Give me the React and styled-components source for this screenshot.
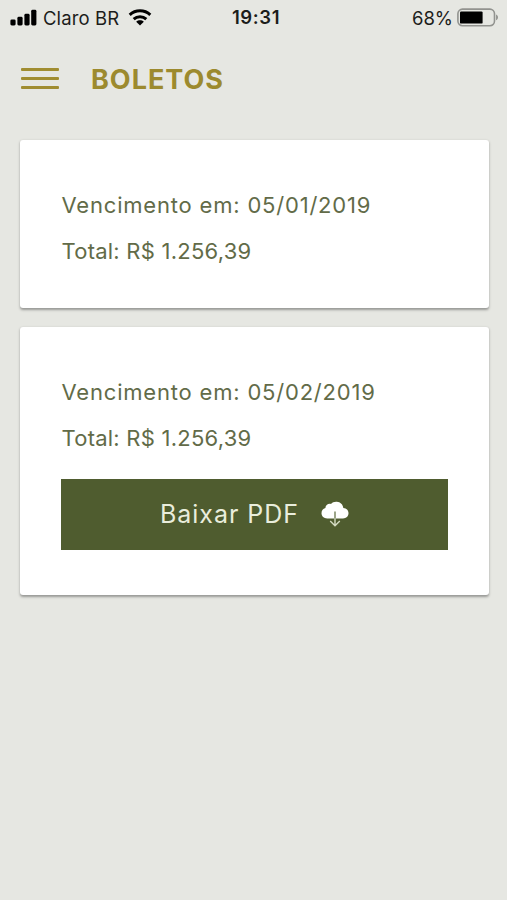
import React from "react";
import styled, { createGlobalStyle } from "styled-components";

const boletos = [
  { id: 1, vencimento: "05/01/2019", total: "1.256,39" },
  { id: 2, vencimento: "05/02/2019", total: "1.256,39", pdf: true },
];

const SignalIcon = () => (
  <svg width="27" height="18" viewBox="0 0 27 18">
    <rect x="0.4" y="10.4" width="5.2" height="6" rx="1.4" />
    <rect x="7.4" y="7.8" width="5.2" height="8.6" rx="1.4" />
    <rect x="14.4" y="4.8" width="5.2" height="11.6" rx="1.4" />
    <rect x="21.2" y="0.8" width="5.2" height="15.6" rx="1.4" />
  </svg>
);

const WifiIcon = () => (
  <svg width="24" height="18" viewBox="0 0 24 18">
    <g fill="none" stroke="#000" strokeWidth="3">
      <path d="M1.7 5.9C7.5 0.5 16.5 0.5 22.3 5.9" />
      <path d="M5.7 10.1C9.3 6.8 14.7 6.8 18.3 10.1" />
    </g>
    <path d="M8.2 12.7C10.4 10.8 13.6 10.8 15.8 12.7L12 16.6Z" />
  </svg>
);

const BatteryIcon = () => (
  <svg width="42" height="20" viewBox="0 0 42 20">
    <rect
      x="0.9"
      y="1.1"
      width="36.6"
      height="16.6"
      rx="4.6"
      fill="none"
      stroke="#92938f"
      strokeWidth="1.6"
    />
    <rect x="3" y="3.4" width="22.6" height="12.2" rx="1.2" />
    <path d="M39.2 6.4C41.4 7.6 41.4 11 39.2 12.2Z" fill="#858682" />
  </svg>
);

const CloudIcon = () => (
  <svg width="28" height="26" viewBox="0 0 28 26">
    <path
      fill="#fff"
      d="M6.2 17.4C2.9 17.4 0.5 15.2 0.5 12.3C0.5 9.6 2.1 7.6 4.4 7.1C4.5 4.3 7 2.3 10 3C11.3 1.4 13.5 0.6 15.8 0.8C19.4 1.1 22 3.6 22.3 7.1C25.4 7.3 27.5 9.5 27.5 12.2C27.5 15.2 25.2 17.4 22 17.4Z"
    />
    <path d="M14 10.5V17.4" stroke="#8b9574" strokeWidth="1.7" />
    <path
      d="M14 17.4V24.5M9.2 20L14 24.8L18.8 20"
      fill="none"
      stroke="#d4dac2"
      strokeWidth="1.4"
    />
  </svg>
);

export default function App() {
  return (
    <>
      <GlobalStyle />
      <Screen>
        <StatusBar>
          <Carrier>
            <SignalIcon />
            <span>Claro BR</span>
            <WifiIcon />
          </Carrier>
          <Clock>19:31</Clock>
          <Battery>
            <span>68%</span>
            <BatteryIcon />
          </Battery>
        </StatusBar>
        <Header>
          <MenuButton aria-label="Menu">
            <MenuLine />
            <MenuLine />
            <MenuLine />
          </MenuButton>
          <Title>BOLETOS</Title>
        </Header>
        <List>
          {boletos.map((boleto) => (
            <Card key={boleto.id}>
              <Text $spacing="0.8px">Vencimento em: {boleto.vencimento}</Text>
              <Text $spacing="0.24px">Total: R$ {boleto.total}</Text>
              {boleto.pdf && (
                <Button>
                  <span>Baixar PDF</span>
                  <CloudIcon />
                </Button>
              )}
            </Card>
          ))}
        </List>
      </Screen>
    </>
  );
}

const GlobalStyle = createGlobalStyle`
  * {
    box-sizing: border-box;
  }
  body {
    margin: 0;
    background: #e6e7e2;
    font-family: Inter, "Liberation Sans", sans-serif;
  }
`;
const Screen = styled.div`
  width: 100%;
  height: 900px;
  overflow: hidden;
  background: #e6e7e2;
`;
const StatusBar = styled.div`
  display: grid;
  grid-template-columns: 1fr auto 1fr;
  align-items: center;
  height: 35px;
  padding: 0 8px 0 10px;
  color: #1c1d1b;
  font-size: 18.5px;
`;
const Carrier = styled.div`
  display: flex;
  align-items: center;
  gap: 6px;
  letter-spacing: 0.1px;
  white-space: nowrap;
  span {
    margin-right: 3px;
  }
`;
const Clock = styled.div`
  padding: 0 0 1px 3px;
  font-weight: 600;
  letter-spacing: 0.6px;
`;
const Battery = styled.div`
  display: flex;
  align-items: center;
  justify-content: flex-end;
  gap: 4px;
`;
const Header = styled.header`
  display: flex;
  align-items: center;
  height: 87px;
  padding: 0 21px;
`;
const MenuButton = styled.button`
  display: flex;
  flex-direction: column;
  gap: 6px;
  width: 38px;
  margin: 0 32px 1px 0;
  padding: 0;
  border: 0;
  background: none;
`;
const MenuLine = styled.span`
  height: 3px;
  border-radius: 1px;
  background: #a08d31;
`;
const Title = styled.h1`
  margin: 2px 0 0;
  color: #9c8a2e;
  font-size: 27px;
  font-weight: 650;
  line-height: 32px;
  letter-spacing: 1px;
`;
const List = styled.main`
  display: flex;
  flex-direction: column;
  gap: 19px;
  padding: 18px 18px 0 20px;
`;
const Card = styled.section`
  padding: 42px 41px 34px;
  border-radius: 3px;
  background: #fff;
  box-shadow: 0 1.5px 2.5px rgba(0, 0, 0, 0.34);
`;
const Text = styled.p`
  margin: 0;
  padding-left: 0.5px;
  color: #626b48;
  font-size: 22px;
  font-weight: 400;
  line-height: 46px;
  letter-spacing: ${(props) => props.$spacing};
  white-space: nowrap;
`;
const Button = styled.button`
  display: flex;
  align-items: center;
  justify-content: center;
  gap: 22px;
  width: 100%;
  height: 71px;
  margin: 18px 0 11px;
  padding: 0 0 2px;
  border: 0;
  background: #4f5c2f;
  color: #e9eddc;
  font-family: inherit;
  font-size: 25px;
  font-weight: 400;
  letter-spacing: 0.95px;
`;
